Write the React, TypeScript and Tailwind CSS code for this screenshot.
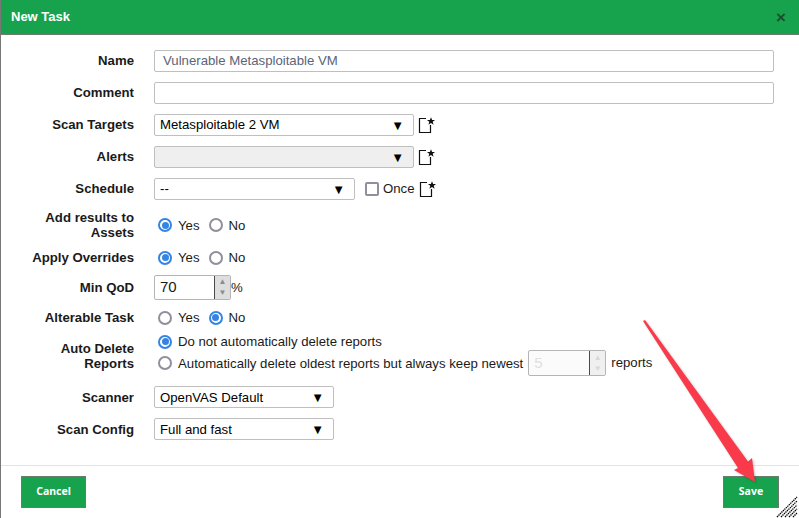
import React from 'react';

const Label = ({ children, className = '' }: { children: React.ReactNode; className?: string }) => (
  <div className={`w-[133px] shrink-0 text-right font-bold text-[13.2px] leading-[15px] text-[#1a1a1a] ${className}`}>
    {children}
  </div>
);

const Row = ({ children, className = 'items-center' }: { children: React.ReactNode; className?: string }) => (
  <div className={`flex gap-[20px] ${className}`}>{children}</div>
);

const Select = ({ value, width, disabled, textClass = '' }: { value?: string; width: string; disabled?: boolean; textClass?: string }) => (
  <div
    className={`${width} h-[22px] flex items-center justify-between pl-[5px] pr-[9px] border border-[#bfbfbf] rounded-[2px] text-[13.2px] text-black ${
      disabled ? 'bg-[#efefef]' : 'bg-white'
    }`}
  >
    <span className={textClass}>{value}</span>
    <span className="text-[13px] leading-none">▼</span>
  </div>
);

const Radio = ({ checked, label }: { checked?: boolean; label: string }) => (
  <label className="flex items-center gap-[6px] text-[13.2px] leading-[15px] text-[#1a1a1a]">
    <span
      className={`w-[14px] h-[14px] rounded-full border-2 flex items-center justify-center bg-white ${
        checked ? 'border-[#3584e4]' : 'border-[#8f8f9d]'
      }`}
    >
      {checked && <span className="w-[7px] h-[7px] rounded-full bg-[#3584e4]" />}
    </span>
    {label}
  </label>
);

const YesNo = ({ yes }: { yes: boolean }) => (
  <div className="flex gap-[9px] pl-[5px] -ml-px">
    <Radio checked={yes} label="Yes" />
    <Radio checked={!yes} label="No" />
  </div>
);

const NumberInput = ({ value, width, disabled }: { value: string; width: string; disabled?: boolean }) => (
  <div
    className={`${width} flex border border-[#b5b5b5] rounded-[2px] overflow-hidden ${disabled ? 'bg-[#fbfbfb]' : 'bg-white'}`}
  >
    <div className={`flex-1 pl-[5px] flex items-center ${disabled ? 'text-[15px] text-[#e0e0e0]' : 'text-[15px] text-[#1a1a1a]'}`}>
      {value}
    </div>
    <div
      className={`w-[16px] border-l border-[#4a4a4a] flex flex-col items-center justify-center gap-[3px] text-[8px] leading-[8px] ${
        disabled ? 'bg-[#f0f0f0] text-[#d8d8d8]' : 'bg-[#dedede] text-[#8c8c8c]'
      }`}
    >
      <span>▲</span>
      <span>▼</span>
    </div>
  </div>
);

const NewIcon = () => (
  <svg width="18" height="18" viewBox="0 0 18 18" className="shrink-0">
    <path d="M1.5 2.5H8M1.5 2V16.5H12.5V9" fill="none" stroke="#111" strokeWidth="1.2" />
    <path d="M13 1.2l1.1 2.7h3l-2.4 1.9 0.9 3-2.6-1.8-2.6 1.8 0.9-3-2.4-1.9h3z" fill="#111" />
  </svg>
);

const Button = ({ children, width }: { children: string; width: string }) => (
  <button
    className={`${width} h-[32px] bg-[#17a34d] border border-[#6b7a70] text-white font-bold text-[10.5px] font-['Noto_Sans',sans-serif]`}
  >
    {children}
  </button>
);

export default function App() {
  return (
    <div className="relative w-[799px] h-[518px] overflow-hidden bg-white border-l border-[#777777] font-['Liberation_Sans',Arial,sans-serif] flex flex-col">
      {/* Title bar */}
      <div className="h-[35px] shrink-0 bg-[#17a34d] border-b border-[#6f7a73] flex items-center justify-between pl-[10px] pr-[13px]">
        <span className="text-white font-bold text-[13px]">New Task</span>
        <span className="text-[#174f30] font-bold text-[17px] leading-none">×</span>
      </div>

      {/* Form */}
      <div className="flex-1 flex flex-col gap-[10px] pt-[15px]">
        <Row>
          <Label className="pb-[2px]">Name</Label>
          <div className="w-[620px] h-[22px] border border-[#bfbfbf] rounded-[2px] pl-[8px] flex items-center text-[13.2px] text-[#5a6478]">
            Vulnerable Metasploitable VM
          </div>
        </Row>
        <Row>
          <Label className="pb-[2px]">Comment</Label>
          <div className="w-[620px] h-[22px] border border-[#bfbfbf] rounded-[2px]" />
        </Row>
        <Row>
          <Label className="pb-[2px]">Scan Targets</Label>
          <div className="flex items-center gap-[4px]">
            <Select value="Metasploitable 2 VM" width="w-[260px]" />
            <NewIcon />
          </div>
        </Row>
        <Row>
          <Label className="pb-[2px]">Alerts</Label>
          <div className="flex items-center gap-[4px]">
            <Select width="w-[260px]" disabled />
            <NewIcon />
          </div>
        </Row>
        <Row>
          <Label className="pb-[2px]">Schedule</Label>
          <div className="flex items-center">
            <Select value="--" width="w-[201px]" />
            <span className="ml-[10px] w-[14px] h-[14px] border-2 border-[#8f8f9d] rounded-[2px]" />
            <span className="ml-[4px] text-[13.2px] text-[#1a1a1a]">Once</span>
            <span className="ml-[4px]">
              <NewIcon />
            </span>
          </div>
        </Row>
        <Row>
          <Label>
            Add results to
            <br />
            Assets
          </Label>
          <YesNo yes />
        </Row>
        <Row>
          <Label>Apply Overrides</Label>
          <YesNo yes />
        </Row>
        <Row>
          <Label>Min QoD</Label>
          <div className="flex items-center text-[13.2px] text-[#1a1a1a]">
            <NumberInput value="70" width="w-[77px] h-[25px]" />
            %
          </div>
        </Row>
        <Row>
          <Label>Alterable Task</Label>
          <YesNo yes={false} />
        </Row>
        <Row className="items-start">
          <Label className="pt-[6px]">
            Auto Delete
            <br />
            Reports
          </Label>
          <div className="flex flex-col pl-[4px] -mt-px">
            <Radio checked label="Do not automatically delete reports" />
            <div className="flex items-center mt-px">
              <Radio label="Automatically delete oldest reports but always keep newest" />
              <span className="ml-[5px]">
                <NumberInput value="5" width="w-[78px] h-[26px]" disabled />
              </span>
              <span className="ml-[5px] text-[13.2px] text-[#1a1a1a]">reports</span>
            </div>
          </div>
        </Row>
        <Row>
          <Label>Scanner</Label>
          <Select value="OpenVAS Default" width="w-[180px]" textClass="pt-[2px]" />
        </Row>
        <Row>
          <Label>Scan Config</Label>
          <Select value="Full and fast" width="w-[180px]" textClass="pt-[2px]" />
        </Row>
      </div>

      {/* Footer */}
      <div className="h-[53px] shrink-0 border-t border-[#e3e3e3] pt-[10px] pl-[20px] pr-[20px] flex justify-between items-start">
        <Button width="w-[65px]">Cancel</Button>
        <Button width="w-[56px]">Save</Button>
      </div>

      {/* Resize handle */}
      <svg width="22" height="22" viewBox="0 0 22 22" className="absolute right-[1px] bottom-0">
        <path
          d="M1 21L21 1M5 21L21 5M9 21L21 9M13 21L21 13M17 21L21 17"
          stroke="#000"
          strokeWidth="1.3"
          strokeDasharray="1.4 0.7"
        />
      </svg>

      {/* Annotation arrow */}
      <svg
        width="799"
        height="518"
        viewBox="0 0 799 518"
        className="absolute -left-px top-0 pointer-events-none drop-shadow-[1px_1px_1px_rgba(0,0,0,0.25)]"
      >
        <polygon points="643,321 645,320 748,461.5 752,458 755,482 734,470 738,468" fill="#f93a4a" />
      </svg>
    </div>
  );
}
